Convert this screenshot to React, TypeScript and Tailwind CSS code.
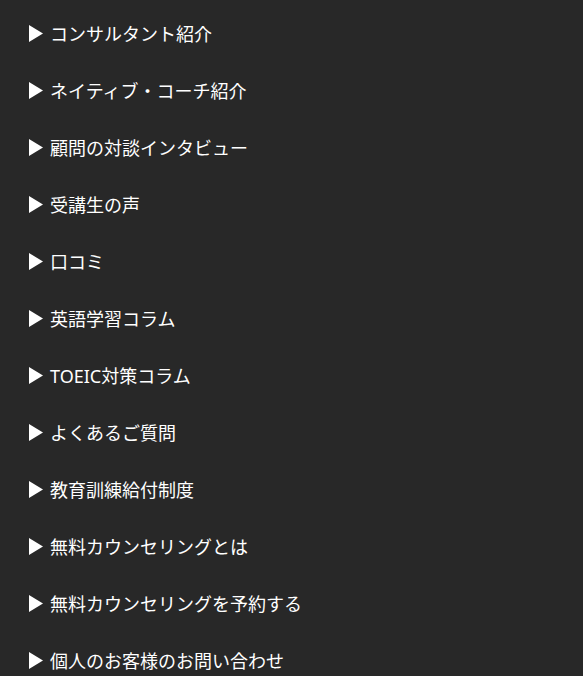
const ITEMS = [
  'コンサルタント紹介',
  'ネイティブ・コーチ紹介',
  '顧問の対談インタビュー',
  '受講生の声',
  '口コミ',
  '英語学習コラム',
  'TOEIC対策コラム',
  'よくあるご質問',
  '教育訓練給付制度',
  '無料カウンセリングとは',
  '無料カウンセリングを予約する',
  '個人のお客様のお問い合わせ',
];

export default function App() {
  return (
    <div
      className="min-h-screen bg-[#282828] text-white"
      style={{ fontFamily: '"Noto Sans", "Noto Sans CJK JP", sans-serif' }}
    >
      <ul className="pt-[5px]">
        {ITEMS.map((label) => (
          <li key={label} className="flex h-[57px] items-center pl-[29px]">
            <svg width="14" height="17" viewBox="0 0 14 17" className="shrink-0">
              <polygon points="0,0 14,8.5 0,17" fill="#ffffff" />
            </svg>
            <a href="#" className="ml-[7px] text-[18px] leading-none">
              {label}
            </a>
          </li>
        ))}
      </ul>
    </div>
  );
}
